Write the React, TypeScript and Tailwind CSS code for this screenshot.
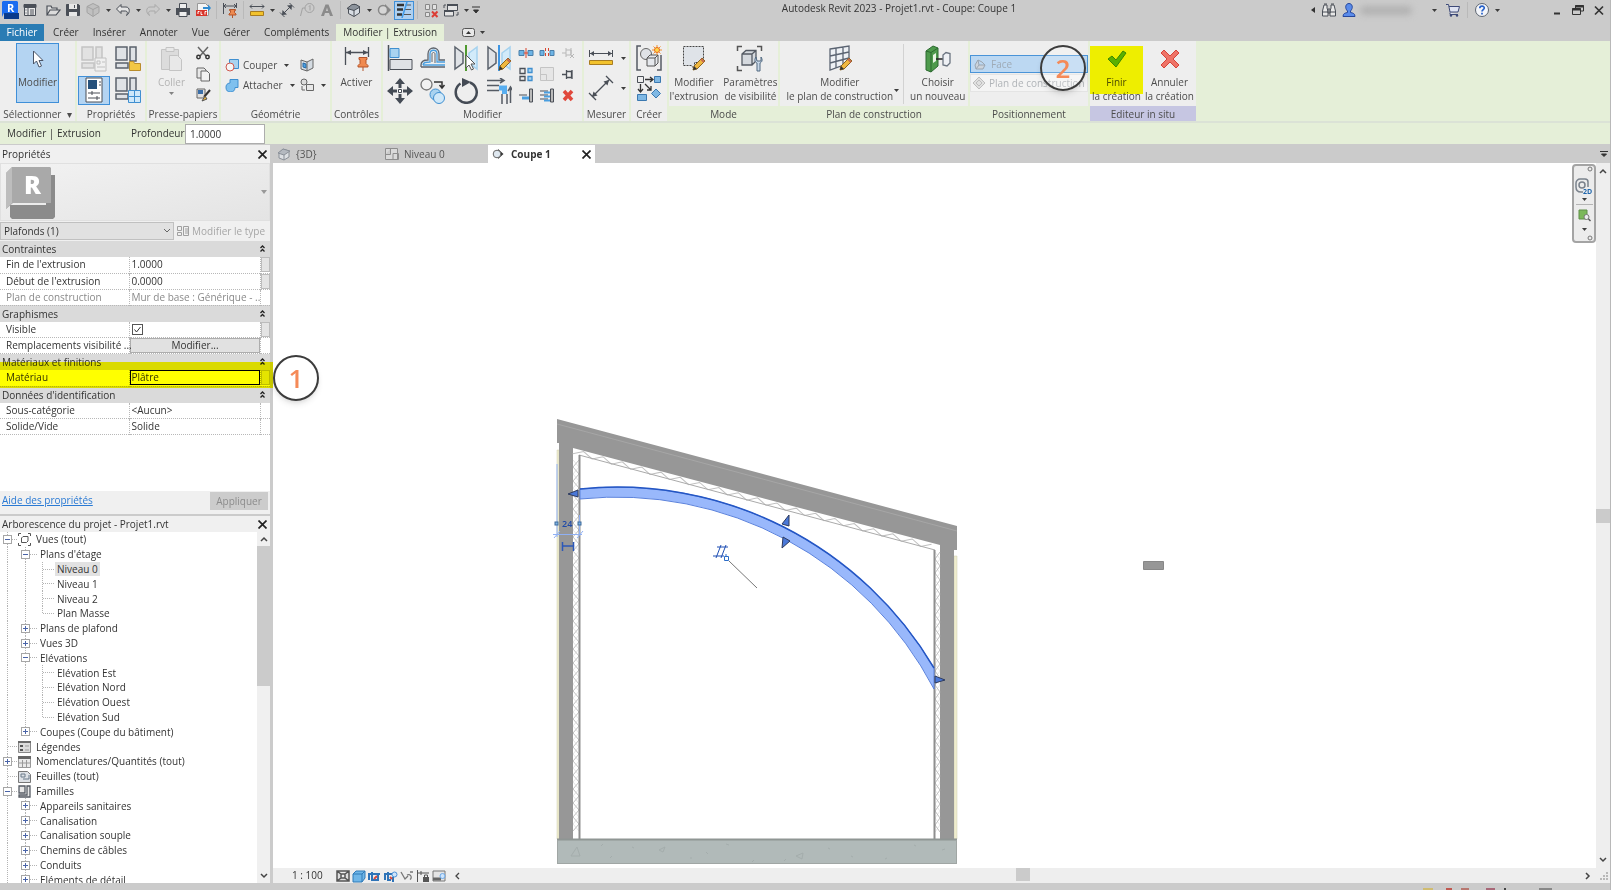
import { ReactNode } from "react";

type IconProps = { w?: number; h?: number; className?: string; children: ReactNode };

const Icon = ({ w = 16, h = 16, className = "", children }: IconProps) => (
  <svg
    width={w}
    height={h}
    viewBox={`0 0 ${w} ${h}`}
    fill="none"
    className={`shrink-0 ${className}`}
    aria-hidden="true"
  >
    {children}
  </svg>
);

const DARK = "#4a4f57";
const BLUE = "#3f8fd0";
const SKY = "#a9d3f0";

const Caret = ({ className = "" }: { className?: string }) => (
  <Icon w={5} h={3} className={className}>
    <path d="M0 0h5L2.500 3z" fill="#3c3c3c" />
  </Icon>
);

const Pencil = ({ x, y }: { x: number; y: number }) => (
  <g transform={`translate(${x} ${y})`}>
    <path d="M0 12l1-4 8-8 3 3-8 8z" fill="#f0b840" stroke="#8a6420" />
    <path d="M8 1l3 3" stroke="#c76a50" strokeWidth="2" />
    <path d="M0 12l1-4 3 3z" fill="#333" />
  </g>
);

const Pin = ({ x, y }: { x: number; y: number }) => (
  <g transform={`translate(${x} ${y})`} stroke="#b4542a" fill="#f08a50">
    <path d="M1 .5h8v2H8v4l2 2v1.500H0V8.500l2-2v-4H1z" />
    <path d="M5 10v4" />
  </g>
);

const RevitLogo = () => (
  <Icon w={18} h={20}>
    <path d="M3 13h15v6H3z" fill="#0b3f94" />
    <path d="M2 1h14l1 1v11H3l-2 4V2z" fill="#1a6cf0" />
    <path d="M16 13h2v6H4l-1-5z" fill="#0a3a8a" />
    <text x="6" y="12" fontSize="11" fontWeight="700" fill="#fff" fontFamily="Open Sans, sans-serif">
      R
    </text>
  </Icon>
);

const quickIcons: Record<string, ReactNode> = {
  home: (
    <>
      <path d="M2.500 3h11v10.500h-11z" fill="#e8e8e8" stroke={DARK} />
      <path d="M2 2.500h12v3H2zM6 6v8" fill={DARK} stroke={DARK} />
      <path d="M8 8h4M8 10h4M8 12h4M3.500 8h1M3.500 11h1" stroke={DARK} />
    </>
  ),
  open: (
    <path d="M2 13V4h4l1 2h5v2M2 13l3-5h10l-4 5z" stroke={DARK} strokeWidth="1.200" fill="#dcdcdc" />
  ),
  save: (
    <>
      <path d="M1.500 2.500h12l1 1v10h-13z" fill={DARK} stroke={DARK} />
      <path d="M4 2h8v5H4zM4 10h8v4H4z" fill="#e8e8e8" />
      <path d="M9 3h1v3H9z" fill={DARK} />
    </>
  ),
  sync: (
    <>
      <path d="M8 1.500l6 3v6l-6 4-6-4v-6z" fill="#c0c0c0" stroke="#a2a2a2" />
      <path d="M2 4.500l6 3 6-3M8 7.500v7" stroke="#a2a2a2" />
    </>
  ),
  undo: (
    <path d="M6 2.500L1.500 7 6 11.500V9h4.500c2 0 2.500 2 1 4.500 4-2.500 3.500-8.500-.5-8.500H6z" fill="#e4e4e4" stroke={DARK} />
  ),
  redo: (
    <path d="M10 2.500L14.500 7 10 11.500V9H5.500c-2 0-2.500 2-1 4.500C.5 11 1 5 5 5h5z" stroke="#a9a9a9" />
  ),
  print: (
    <>
      <path d="M4.500 1.500h7v5h-7z" fill="#eee" stroke={DARK} />
      <path d="M1 6h14v7H1z" fill={DARK} />
      <path d="M4 9.500h8v5H4z" fill="#eee" stroke={DARK} />
    </>
  ),
  pdf: (
    <>
      <path d="M2.500 1.500h8l3 3v9h-11z" fill="#f4f4f4" stroke="#999" />
      <path d="M8 5h5V2.500L16 6l-3 3.500V7H8z" fill="#2f8ad0" />
      <path d="M1 8h11v6H1z" fill="#d8342a" />
      <path d="M3 12v-2.500h1.500M6 9.500v3h1.500M10 12.500v-3h1.500" stroke="#fff" />
    </>
  ),
  dimension: (
    <>
      <path d="M1.500 1v11M14.500 1v5M2 4h12M4 2L2 4l2 2M12 2l2 2-2 2" stroke={DARK} />
      <path d="M7.500 7.500h6v1h-1v2l1.500 1.500v1h-7v-1L8.500 10.500v-2h-1zM10.500 13v3" fill="#ee8a50" stroke="#b4542a" />
    </>
  ),
  measure: (
    <>
      <path d="M1 4.500h14M3 2.500l-2 2 2 2M13 2.500l2 2-2 2" stroke={DARK} />
      <path d="M1.500 9.500h13v4h-13z" fill="#f2c22c" stroke="#a87c20" />
    </>
  ),
  aligned: (
    <>
      <path d="M3 13L13 3M1 10.500L5.500 15M10.500 1L15 5.500" stroke={DARK} />
      <path d="M3 13l.5-5L8 12.500zM13 3L8 3.500 12.500 8z" fill={DARK} />
    </>
  ),
  tag: (
    <>
      <circle cx="10.500" cy="6" r="4.500" stroke="#a2a2a2" />
      <path d="M6 6H3.500L1.500 14M10 4.500l1-1v5" stroke="#a2a2a2" />
    </>
  ),
  letter: <path d="M2 14L6.500 2.500h3L14 14h-3l-1-3H6l-1 3zM7 9h2L8 5.500z" fill="#8b8b8b" fillRule="evenodd" />,
  view3d: (
    <>
      <path d="M2.500 6.500L8 2l5.500 3v6L8 14.500l-5.500-3z" fill="#d8dde3" stroke={DARK} />
      <path d="M1 6.500l5-4h4L14 5 8 8.500z" fill="#8c939c" stroke={DARK} />
      <path d="M8 8.500v6" stroke={DARK} />
    </>
  ),
  section: (
    <>
      <path d="M9 2l6 6-6 6z" fill="#888" />
      <circle cx="7" cy="8" r="4.500" fill="#d6d6d6" stroke="#888" strokeWidth="1.500" />
    </>
  ),
  thin: (
    <>
      <path d="M1 3h7M1 7.500h6M1 12.500h5" stroke="#333" strokeWidth="2.500" />
      <path d="M9.500 3H15M9 7.500h6M8 12.500h7" stroke="#555" />
      <path d="M11 0L6 16" stroke="#3f9be8" strokeWidth="1.500" />
    </>
  ),
  closeViews: (
    <>
      <path d="M2.500 2.500h4v5h-4zM9.500 2.500h4v5h-4zM2.500 10.500h4v4h-4z" fill="#e2e2e2" stroke="#888" />
      <path d="M9 9.500l5.500 5.500M14.500 9.500L9 15" stroke="#dc3c34" strokeWidth="2" />
    </>
  ),
  switchViews: (
    <>
      <path d="M4.500 2.500h10v6h-10zM1.500 8.500h9v5.500h-9z" fill="#e4e4e4" stroke={DARK} />
      <path d="M4 3h11M1 9h10" stroke={DARK} strokeWidth="2" />
      <path d="M1 6V3h2M15 10v3h-2" stroke={DARK} />
    </>
  ),
};

const quickBar = [
  ["open", "Ouvrir"], ["save", "Enregistrer"], ["sync", "Synchroniser"], ["v"], ["undo", "Annuler"], ["v"],
  ["redo", "Rétablir"], ["v"], ["print", "Imprimer"], ["pdf", "Exporter PDF"], ["|"], ["dimension", "Cote"],
  ["|"], ["measure", "Mesurer"], ["v"], ["aligned", "Cote alignée"], ["tag", "Etiquette"], ["letter", "Texte"],
  ["|"], ["view3d", "Vue 3D"], ["v"], ["section", "Coupe"], ["thin", "Lignes fines"], ["|"],
  ["closeViews", "Fermer les vues"], ["switchViews", "Changer de fenêtre"], ["v"],
];

const TitleBar = () => (
  <header className="flex h-[24px] items-start bg-[#cbcbcb]">
    <div className="flex h-[20px] items-center">
      <button type="button" aria-label="Revit" className="flex w-[20px] justify-center">
        <RevitLogo />
      </button>
      <button type="button" aria-label="Accueil" className="mr-[3px] flex w-[20px] justify-center">
        <Icon>{quickIcons.home}</Icon>
      </button>
      {quickBar.map(([name, label], i) => {
        if (name === "|") return <span key={i} className="mx-[3px] h-[18px] w-px bg-[#b9b9b9]" />;
        if (name === "v")
          return (
            <span key={i} className="flex w-[10px] justify-center">
              <Caret />
            </span>
          );
        return (
          <button
            key={i}
            type="button"
            aria-label={label}
            className={`flex h-[19px] w-[20px] items-center justify-center ${
              name === "thin" ? "border border-[#3f8fd8] bg-[#aed0f0]" : ""
            }`}
          >
            <Icon>{quickIcons[name]}</Icon>
          </button>
        );
      })}
      <button type="button" aria-label="Personnaliser" className="flex w-[10px] justify-center">
        <Icon w={8} h={8}>
          <path d="M0 1h8M1.500 4h5L4 7z" stroke="#333" fill="#333" />
        </Icon>
      </button>
    </div>
    <h1 className="flex-1 pl-[6px] text-center leading-[16px]">Autodesk Revit 2023 - Projet1.rvt - Coupe: Coupe 1</h1>
    <div className="flex h-[20px] items-center pr-[5px]">
      <Icon w={4} h={6}>
        <path d="M4 0v6L0 3z" fill="#333" />
      </Icon>
      <button type="button" aria-label="Rechercher" className="ml-[6px]">
        <Icon>
          <path d="M3 3h3v3l1 3v5H1.500V9zM10 3h3l1.500 6v5H9V9l1-3zM7 7h2v4H7z" fill="#e8e8e8" stroke={DARK} />
          <path d="M3 2h3M10 2h3M1.500 10H7M9 10h5.500" stroke={DARK} />
        </Icon>
      </button>
      <button type="button" aria-label="Compte" className="ml-[5px] flex items-center">
        <Icon w={14} h={14}>
          <path d="M1 13.500c0-3 2-3.500 4.500-4V8C2.500 5 3.500.5 7 .5S11.500 5 8.500 8v1.500c2.500.5 4.500 1 4.500 4z" fill="#5a8bea" stroke="#26479c" />
        </Icon>
        <span className="ml-[4px] h-[9px] w-[52px] rounded-full bg-[#b2b2b2] blur-[3px]" />
        <Caret className="ml-[20px]" />
      </button>
      <button type="button" aria-label="Panier" className="ml-[8px]">
        <Icon>
          <path d="M1 2.500h2.500l1.500 7.500h8l1.500-5.500H4M5 10.500v2h8" fill="#dfe3f2" stroke="#3e4a78" />
          <circle cx="6" cy="13.500" r="1.200" fill="#3e4a78" />
          <circle cx="12" cy="13.500" r="1.200" fill="#3e4a78" />
        </Icon>
      </button>
      <span className="mx-[6px] h-[16px] w-px bg-[#b9b9b9]" />
      <button type="button" aria-label="Aide" className="flex items-center">
        <Icon>
          <circle cx="8" cy="8" r="6.500" fill="#f3f5fa" stroke="#5d6570" />
          <path d="M5.800 6.300c0-3 4.500-2.800 4.500-.3 0 1.500-2.300 1.700-2.300 3.500M8 10.800v1.700" stroke="#2660c8" strokeWidth="1.700" />
        </Icon>
        <Caret className="ml-[5px]" />
      </button>
      <button type="button" aria-label="Réduire" className="ml-[53px]">
        <Icon w={8} h={12}>
          <path d="M1 9.500h6" stroke="#333" strokeWidth="2" />
        </Icon>
      </button>
      <button type="button" aria-label="Restaurer" className="ml-[11px]">
        <Icon w={12} h={12}>
          <path d="M3.500 6V1.500h8V7H9M.5 4.500h8v6h-8z" stroke="#333" />
          <path d="M3 2.500h9M0 5.500h9" stroke="#333" strokeWidth="2" />
        </Icon>
      </button>
      <button type="button" aria-label="Fermer" className="ml-[10px]">
        <Icon w={11} h={11}>
          <path d="M1 1.500l8 8M9 1.500l-8 8" stroke="#333" strokeWidth="1.700" />
        </Icon>
      </button>
    </div>
  </header>
);

const menuTabs = ["Créer", "Insérer", "Annoter", "Vue", "Gérer", "Compléments"];

const MenuTabs = () => (
  <nav className="flex h-[17px] items-stretch bg-[#cbcbcb] leading-[17px]">
    <button type="button" className="mr-[2px] w-[44px] bg-[#2a7cb4] text-center text-white">
      Fichier
    </button>
    {menuTabs.map((tab) => (
      <button type="button" key={tab} className="px-[7px]">
        {tab}
      </button>
    ))}
    <button type="button" className="bg-[#e5efd8] px-[7px]">
      Modifier | Extrusion
    </button>
    <button type="button" aria-label="Réduire le ruban" className="ml-[18px] flex items-center gap-[5px]">
      <Icon w={13} h={9}>
        <rect x=".5" y=".5" width="12" height="8" rx="2" fill="#e8e8e8" stroke="#555" />
        <path d="M6.500 3L9 6H4z" fill="#333" />
      </Icon>
      <Caret />
    </button>
  </nav>
);

type PanelProps = { title: string; width: string; foot?: string; children: ReactNode };

const Panel = ({ title, width, foot = "", children }: PanelProps) => (
  <section className={`flex shrink-0 flex-col bg-[#eeeeee] ${width}`}>
    <div className="flex flex-1 justify-center">{children}</div>
    <h2 className={`h-[15px] text-center leading-[16px] whitespace-nowrap ${foot}`}>{title}</h2>
  </section>
);

const BigButton = ({ icon, lines, className = "" }: { icon: ReactNode; lines: string[]; className?: string }) => (
  <button type="button" className={`flex flex-col items-center pt-[4px] ${className}`}>
    <span className="flex h-[28px] items-center">{icon}</span>
    <span className="mt-[2px] leading-[14px] whitespace-nowrap">
      {lines.map((line) => (
        <span key={line} className="block text-center">
          {line}
        </span>
      ))}
    </span>
  </button>
);

const ToolButton = ({ label, className = "", children }: { label: string; className?: string; children: ReactNode }) => (
  <button type="button" aria-label={label} className={`flex items-center justify-center ${className}`}>
    {children}
  </button>
);

const WindowGrid = ({ extra, muted = false }: { extra: ReactNode; muted?: boolean }) => (
  <Icon w={26} h={26}>
    <g stroke={muted ? "#c4c4c4" : "#5b626c"} fill={muted ? "#e2e2e2" : "#dfe2e6"} strokeWidth="1.500">
      <path d="M1 1h11v13H1zM15 1h6v14h-6zM1 17h12v5H1z" />
    </g>
    {extra}
  </Icon>
);

const modifyTools: [string, ReactNode][] = [
  ["Aligner", (
    <>
      <path d="M1.500 0v26" stroke={DARK} strokeWidth="1.500" />
      <path d="M3 3.500h9v9H3z" fill={SKY} stroke={BLUE} />
      <path d="M3 14.500h22v10H3z" fill="#dfe2e6" stroke={DARK} />
    </>
  )],
  ["Décaler", (
    <>
      <path d="M1 22v-2c0-4 3-5 7-5V9c0-8 11-8 11 0v6h6M1 22h24" stroke="#5b626c" strokeWidth="1.300" />
      <path d="M3 20c0-3 3-3 7-3V9c0-5 7-5 7 0v8h8M3 20h22" stroke="#4a9fe0" strokeWidth="1.300" />
      <path d="M12 17V9c0-2 3-2 3 0v9" stroke="#5b626c" />
    </>
  )],
  ["Symétrie - Choisir l'axe", (
    <>
      <path d="M2 2l8 6v10l-8 6z" fill="#dfe2e6" stroke="#5b626c" strokeWidth="1.500" />
      <path d="M24 2l-8 6v10l8 6z" fill="#d2ebfa" stroke="#a5d2ef" strokeWidth="1.500" />
      <path d="M13 0v26" stroke="#4f9a30" strokeWidth="2" />
      <path d="M13 10v13l3-3 2.500 5 2-1-2.500-5h4z" fill="#fff" stroke="#555" />
    </>
  )],
  ["Symétrie - Dessiner l'axe", (
    <>
      <path d="M2 2l8 6v10l-8 6z" fill="#dfe2e6" stroke="#5b626c" strokeWidth="1.500" />
      <path d="M24 2l-8 6v10l8 6z" fill="#d2ebfa" stroke="#a5d2ef" strokeWidth="1.500" />
      <path d="M13 0v26" stroke="#3f96e4" strokeWidth="2" />
      <Pencil x={13} y={13} />
    </>
  )],
  ["Déplacer", (
    <>
      <path d="M13 0l5 6h-3.500v4h-3V6H8zM13 26l5-6h-3.500v-4h-3v4H8zM0 13l6-5v3.500h4v3H6V18zM26 13l-6-5v3.500h-4v3h4V18z" fill="#444b55" />
      <path d="M11.500 11.500h3v3h-3z" fill="#fff" stroke="#444b55" />
    </>
  )],
  ["Copier", (
    <>
      <circle cx="6.500" cy="6.500" r="5.500" fill="#f2f2f2" stroke="#777" strokeWidth="1.300" />
      <path d="M14 4h8v5M19.500 7l2.500 3 2.500-3" stroke="#333" strokeWidth="1.500" />
      <circle cx="15.500" cy="16.500" r="5.500" fill={SKY} stroke={BLUE} />
      <circle cx="19" cy="20" r="5.500" fill="#cfe8f9" stroke={BLUE} />
    </>
  )],
  ["Rotation", (
    <>
      <path d="M17 4.500A10.500 10.500 0 1 1 7.500 5.500" stroke="#444b55" strokeWidth="2.500" />
      <path d="M9 0l9 4-9 5z" fill="#444b55" />
    </>
  )],
  ["Ajuster", (
    <>
      <path d="M1 2.500h17M14 0l4 2.500L14 5M24.500 25V9M22 13l2.500-4 2.500 4M1 7.500h12M1 12.500h12M16 16v10M21 16v10" stroke="#555b64" strokeWidth="1.500" />
      <path d="M13 10h5.500v6" stroke="#58aef0" strokeWidth="5" />
    </>
  )],
];

const smallTools: [string, ReactNode][] = [
  ["Scinder", (
    <>
      <path d="M1 5.500h5v5H1zM10 5.500h5v5h-5z" fill="#6db4e6" stroke="#4a7ea8" />
      <path d="M8 3v10M6 8h4" stroke="#d8452f" />
    </>
  )],
  ["Scinder avec espace", (
    <>
      <path d="M1 5.500h4v5H1zM11 5.500h4v5h-4z" fill="#6db4e6" stroke="#4a7ea8" />
      <path d="M6.500 3v10M9.500 3v10" stroke="#d8452f" strokeDasharray="3 2" />
    </>
  )],
  ["Déverrouiller", <path d="M2 8h4M6 3v9M6 5h5v5H6M11 3v6M10 9l4 4M14 9l-4 4" stroke="#b8b8b8" />],
  ["Réseau", (
    <>
      <path d="M2 2.500h5v5H2zM2 10.500h5v4H2z" fill="#eee" stroke={DARK} strokeWidth="1.300" />
      <path d="M10 2.500h4v4h-4zM10 10.500h4v4h-4z" fill={SKY} stroke={BLUE} strokeWidth="1.300" />
    </>
  )],
  ["Echelle", <path d="M1.500 1.500h13v13h-13zM1.500 8.500h6v6" fill="#e6e6e6" stroke="#c4c4c4" />],
  ["Verrouiller", <path d="M2 8.500h4M6.500 4v9M6.500 5.500h5v6h-5M12 4v9" stroke={DARK} strokeWidth="1.300" />],
  ["Ajuster un élément", (
    <>
      <path d="M1 8h8" stroke={DARK} />
      <path d="M4 11h7" stroke="#4a9fe0" strokeWidth="3" />
      <path d="M11.500 2h3v13h-3z" fill="#bbb" stroke={DARK} />
    </>
  )],
  ["Ajuster plusieurs éléments", (
    <>
      <path d="M1 4h8M1 8h8M1 12h8" stroke={DARK} />
      <path d="M5 5.500h6M5 9.500h6M5 13.500h6" stroke="#4a9fe0" strokeWidth="2" />
      <path d="M11.500 2h3v13h-3z" fill="#bbb" stroke={DARK} />
    </>
  )],
  ["Supprimer", <path d="M4 4l8 9M12 4l-8 9" stroke="#e0483c" strokeWidth="3.500" />],
];

const Ribbon = () => (
  <div className="flex h-[80px] gap-[2px] bg-[#e5efd8] text-[#4c4c4c]">
    <Panel title={"Sélectionner\u00a0\u00a0▾"} width="w-[75px]">
      <button type="button" className="mt-[2px] flex h-[60px] w-[43px] flex-col items-center border border-[#3f8fd8] bg-[#b4d4f2] pt-[6px]">
        <Icon w={12} h={18}>
          <path d="M1.500 1v13l3-3 2.500 6 2.500-1L7 10.500h4z" fill="#fff" stroke="#4a5568" />
        </Icon>
        <span className="mt-[6px] leading-[16px]">Modifier</span>
      </button>
    </Panel>
    <Panel title="Propriétés" width="w-[68px]">
      <div className="grid grid-cols-2 gap-x-[2px] pt-[3px]">
        <ToolButton label="Propriétés du type" className="h-[30px] w-[32px]">
          <WindowGrid muted extra={<path d="M14 12h11v13H14zM16 15h3v3h-3zM21 16h3M16 21h8" fill="#f0f0f0" stroke="#c0c0c0" />} />
        </ToolButton>
        <ToolButton label="Catégorie" className="h-[30px] w-[32px]">
          <WindowGrid extra={<path d="M14.500 24.500v-9h4l1 2h6v7z" fill="#f2c744" stroke="#b98d2c" />} />
        </ToolButton>
        <ToolButton label="Propriétés" className="h-[29px] w-[32px] border border-[#3f8fd8] bg-[#b4d4f2]">
          <Icon w={26} h={26}>
            <path d="M5 1h16v24H5z" fill="#fff" stroke={DARK} />
            <path d="M7 3h9v9H7z" fill="#26517c" />
            <path d="M18 5h2M18 8h2M7 16h12M7 21h12M11 14v4M16 19v4" stroke={DARK} />
          </Icon>
        </ToolButton>
        <ToolButton label="Types de familles" className="h-[29px] w-[32px]">
          <WindowGrid extra={<path d="M13.500 13.500h6v6h-6zM19.500 13.500h6v6h-6zM13.500 19.500h6v6h-6zM19.500 19.500h6v6h-6z" fill="#cfe8fa" stroke={BLUE} />} />
        </ToolButton>
      </div>
    </Panel>
    <Panel title="Presse-papiers" width="w-[72px]">
      <div className="flex gap-[10px] pl-[3px]">
        <button type="button" disabled className="flex flex-col items-center pt-[4px] text-[#b4b4b4]">
          <Icon w={24} h={28}>
            <path d="M2.500 4.500h17v20h-17z" fill="#dcdcdc" stroke="#c4c4c4" />
            <path d="M7 2.500h8v4H7zM10.500 10.500h8l4 4v11h-12z" fill="#e8e8e8" stroke="#c4c4c4" />
          </Icon>
          <span className="mt-[2px] leading-[14px]">Coller</span>
          <Caret className="mt-[3px] opacity-60" />
        </button>
        <div className="flex flex-col gap-[5px] pt-[4px]">
          <ToolButton label="Couper dans le presse-papiers">
            <Icon>
              <path d="M3 2l8 9M13 2l-8 9" stroke="#666" strokeWidth="1.500" />
              <circle cx="3.500" cy="12" r="1.700" stroke="#333" strokeWidth="1.500" />
              <circle cx="12.500" cy="12" r="1.700" stroke="#333" strokeWidth="1.500" />
            </Icon>
          </ToolButton>
          <ToolButton label="Copier dans le presse-papiers">
            <Icon>
              <path d="M2 2h7l2 2v8H2z" fill="#e8e8e8" stroke="#666" />
              <path d="M6 5h6l2.500 2.500V15H6z" fill="#f2f2f2" stroke="#666" />
            </Icon>
          </ToolButton>
          <ToolButton label="Appliquer les propriétés du type">
            <Icon>
              <path d="M2 2h8v9H2z" fill="#e0e0e0" stroke="#666" />
              <path d="M3 3h5v4H3z" fill="#3a6ea8" />
              <path d="M15 3l-6 7" stroke="#333" strokeWidth="2" />
              <path d="M10 9l-3 5 5-2z" fill="#e4b040" stroke="#555" />
            </Icon>
          </ToolButton>
        </div>
      </div>
    </Panel>
    <Panel title="Géométrie" width="w-[109px]">
      <div className="flex w-full flex-col px-[4px] pt-[14px] leading-[20px]">
        <div className="flex items-center">
          <button type="button" className="flex items-center gap-[4px]">
            <Icon w={14} h={14}>
              <path d="M4.500 1.500h9v9h-9z" fill={SKY} stroke={BLUE} />
              <circle cx="5" cy="9" r="4" fill="#f6f6f6" stroke="#d05a50" />
            </Icon>
            Couper
          </button>
          <Caret className="mr-auto ml-[7px]" />
          <ToolButton label="Face" className="mr-[12px]">
            <Icon w={14} h={14}>
              <path d="M1 2l6 2 6-3v9l-6 3-6-2z" fill="#d4dbe2" stroke="#666" />
              <path d="M3 5l3 1v4L3 9z" fill="#4a9fe0" stroke="#2a6ca8" />
              <path d="M7 4v9" stroke="#666" />
            </Icon>
          </ToolButton>
        </div>
        <div className="flex items-center">
          <button type="button" className="flex items-center gap-[4px]">
            <Icon w={14} h={14}>
              <path d="M5 1.500h8v8h-3A4.500 4.500 0 1 1 5 5z" fill="#7fc0ee" stroke={BLUE} />
            </Icon>
            Attacher
          </button>
          <Caret className="mr-auto ml-[7px]" />
          <ToolButton label="Fractionner">
            <Icon w={14} h={14}>
              <circle cx="4" cy="4" r="3" fill="#ddd" stroke="#666" />
              <path d="M6.500 6.500h7v6h-7zM2 8v4h3" stroke="#666" fill="#e8e8e8" />
            </Icon>
          </ToolButton>
          <Caret className="ml-[7px]" />
        </div>
      </div>
    </Panel>
    <Panel title="Contrôles" width="w-[49px]">
      <BigButton
        lines={["Activer"]}
        icon={
          <Icon w={26} h={26}>
            <path d="M1.500 1v18M24.500 1v10M2 6.500h22" stroke={DARK} strokeWidth="1.300" />
            <path d="M2 6.500L7 4v5zM24 6.500L19 4v5z" fill={DARK} />
            <Pin x={14} y={11} />
          </Icon>
        }
      />
    </Panel>
    <Panel title="Modifier" width="w-[199px]">
      <div className="grid grid-cols-4 gap-x-[7px] gap-y-[4px] pt-[4px]">
        {modifyTools.map(([label, icon]) => (
          <ToolButton key={label} label={label} className="h-[26px] w-[26px]">
            <Icon w={26} h={26}>
              {icon}
            </Icon>
          </ToolButton>
        ))}
      </div>
      <div className="mr-[3px] ml-[6px] grid grid-cols-3 content-start gap-x-[5px] gap-y-[5px] pt-[4px]">
        {smallTools.map(([label, icon]) => (
          <ToolButton key={label} label={label} className="h-[16px] w-[16px]">
            <Icon>{icon}</Icon>
          </ToolButton>
        ))}
      </div>
    </Panel>
    <Panel title="Mesurer" width="w-[45px]">
      <div className="flex flex-col gap-[4px] pt-[4px]">
        <ToolButton label="Mesurer entre deux références" className="h-[26px] gap-[7px]">
          <Icon w={26} h={26}>
            <path d="M1.500 5v7M24.500 5v7M2 8.500h22" stroke={DARK} />
            <path d="M2 8.500L6 6v5zM24 8.500L20 6v5z" fill={DARK} />
            <path d="M1.500 15.500h23v4h-23z" fill="#f2c22c" stroke="#a87c20" />
          </Icon>
          <Caret />
        </ToolButton>
        <ToolButton label="Cote alignée" className="h-[26px] gap-[7px]">
          <Icon w={26} h={26}>
            <path d="M4 22L21 5M1 18l7 7M18 1l7 7" stroke={DARK} strokeWidth="1.300" />
            <path d="M4 22l1.500-5.500L9.500 20.500zM21 5l-5.500 1.500 4 4z" fill={DARK} />
          </Icon>
          <Caret />
        </ToolButton>
      </div>
    </Panel>
    <Panel title="Créer" width="w-[36px]">
      <div className="flex flex-col gap-[4px] pt-[4px]">
        <ToolButton label="Créer un groupe">
          <Icon w={26} h={26}>
            <path d="M5 1H1v24h4M21 25h4V10" stroke="#555b64" strokeWidth="1.500" />
            <circle cx="10" cy="9" r="5.500" fill="#dfe2e6" stroke="#666" />
            <path d="M11 13l3-3h8v8l-3 3h-8z" fill="#e6e9ed" stroke="#555" />
            <path d="M11 13h8v8M19 13l3-3" stroke="#555" />
            <path d="M21 0v10M16 5h10M17.500 1.500l7 7M24.500 1.500l-7 7" stroke="#f09030" />
            <circle cx="21" cy="5" r="2.500" fill="#ffd84a" stroke="#e86a20" />
          </Icon>
        </ToolButton>
        <ToolButton label="Créer un assemblage">
          <Icon w={26} h={26}>
            <path d="M1.500 1.500h6v6h-6z" fill="#eee" stroke={DARK} />
            <path d="M18.500 1.500h6v6h-6zM1.500 19.500h9v6h-9zM20 14l4.500 4.500L20 23l-4.500-4.500z" fill="#7fb8e4" stroke="#3a78b0" />
            <path d="M9 4.500h8M14 2l3 2.500L14 7M4.500 9v8M2 14l2.500 3L7 14M9 9l6 6M15 11v4h-4" stroke="#333" strokeWidth="1.300" />
          </Icon>
        </ToolButton>
      </div>
    </Panel>
    <Panel title="Mode" width="w-[109px]" foot="bg-[#e5efd8]">
      <div className="flex gap-[5px]">
        <BigButton
          lines={["Modifier", "l'extrusion"]}
          icon={
            <Icon w={26} h={28}>
              <path d="M2.500 1.500h20v16h-9v7l-3-4h-8z" fill="#dfe3e8" stroke="#444" strokeDasharray="2 1" />
              <Pencil x={12} y={13} />
            </Icon>
          }
        />
        <BigButton
          lines={["Paramètres", "de visibilité"]}
          icon={
            <Icon w={28} h={28}>
              <path d="M6 1.500H1.500V6M21 1.500h4.500V6M6 25.500H1.500V21" stroke="#555" strokeWidth="1.500" />
              <path d="M6 9l4-3.500h10V16l-4 4H6zM6 9h10v11M16 9l4-3.500" fill="#d5d9de" stroke="#555b64" strokeWidth="1.300" />
              <path d="M20 12c-2 3-1 5 1 6v8h3v-8c2-1 3-3 1-6v4h-4z" fill="#c8d8e8" stroke="#506880" />
            </Icon>
          }
        />
      </div>
    </Panel>
    <Panel title="Plan de construction" width="w-[188px]" foot="bg-[#e5efd8]">
      <div className="flex pl-[4px]">
        <BigButton
          lines={["Modifier", "le plan de construction"]}
          icon={
            <Icon w={26} h={28}>
              <path d="M3 4l19-3v17l-19 7zM3 11l19-4M3 18l19-5M9 3v20M16 2v18" fill="#eef1f5" stroke="#5b6472" strokeWidth="1.300" />
              <Pencil x={13} y={13} />
            </Icon>
          }
        />
        <Caret className="mt-[48px] mr-[4px] ml-px" />
        <span className="mt-[3px] mr-[6px] h-[60px] w-px bg-[#d2d2d2]" />
        <BigButton
          lines={["Choisir", "un nouveau"]}
          icon={
            <Icon w={28} h={28}>
              <path d="M2 6l7-5 5 2v18l-7 6-5-2z" fill="#4e9a4c" stroke="#2c6a30" />
              <path d="M2 6l5 1.500V27M7 7.500L14 3" stroke="#2c6a30" />
              <path d="M9 10l3-2v8l-3 2z" fill="#e8f4e4" />
              <path d="M12 14h7" stroke="#222" strokeWidth="1.500" />
              <path d="M19 10l3-2.500 4 1V18l-3 3-4-1z" fill="#eef0f4" stroke="#6b7480" strokeWidth="1.300" />
            </Icon>
          }
        />
      </div>
    </Panel>
    <Panel title="Positionnement" width="w-[118px]" foot="bg-[#e5efd8]">
      <div className="relative flex w-full flex-col gap-px pt-[14px] text-[#b0b4b8]">
        <button type="button" disabled className="flex h-[18px] items-center gap-[5px] border border-[#4a94d8] bg-[#bcd8f2] pl-[3px] text-[#9fabb6]">
          <Icon w={12} h={12}>
            <path d="M1 7l3-5 4 2 3 3-2 4H2zM4 2l1 5 6 0M5 7l-3 4" fill="#ccd4dc" stroke="#9aa6b2" />
          </Icon>
          Face
        </button>
        <button type="button" disabled className="flex h-[18px] items-center gap-[4px] border border-[#e4e4e4] bg-[#f4f4f4] pl-[2px] whitespace-nowrap">
          <Icon w={12} h={12}>
            <path d="M6 0l6 6-6 6-6-6zM6 3l3 3-3 3-3-3z" fill="#e0e0e0" stroke="#bdbdbd" />
          </Icon>
          Plan de construction
        </button>
        <div className="absolute top-[4px] right-[2px] flex h-[46px] w-[46px] items-center justify-center rounded-full border-2 border-[#3c3c3c] bg-white/20 text-[26px] font-semibold text-[#f58a58] shadow-md">
          2
        </div>
      </div>
    </Panel>
    <Panel title="Editeur in situ" width="w-[106px]" foot="bg-[#c6c6e2]">
      <div className="relative flex">
        <BigButton
          className="w-[53px]"
          lines={["Finir", "la création"]}
          icon={
            <Icon w={20} h={20}>
              <path d="M1 10l4-3 4 4 7-9 3 2-10 14z" fill="#5ab038" stroke="#3a8820" />
            </Icon>
          }
        />
        <BigButton
          className="w-[53px]"
          lines={["Annuler", "la création"]}
          icon={
            <Icon w={20} h={20}>
              <path d="M4 1l6 6 6-6 3 3-6 6 6 6-3 3-6-6-6 6-3-3 6-6-6-6z" fill="#ee7468" stroke="#d84438" />
            </Icon>
          }
        />
        <div className="pointer-events-none absolute top-[5px] left-0 h-[48px] w-[53px] bg-[#ffff00] mix-blend-multiply" />
      </div>
    </Panel>
  </div>
);

const OptionsBar = () => (
  <div className="flex h-[23px] items-center border-t-2 border-[#dbe2d6] bg-[#e5efd8] pl-[7px]">
    <span className="w-[124px]">Modifier | Extrusion</span>
    <label htmlFor="depth" className="w-[54px]">
      Profondeur
    </label>
    <input
      id="depth"
      defaultValue="1.0000"
      className="h-[20px] w-[80px] border border-[#adadad] bg-white px-[4px]"
    />
  </div>
);

const CloseX = ({ label }: { label: string }) => (
  <button type="button" aria-label={label}>
    <Icon w={9} h={9}>
      <path d="M.5 .5l8 8M8.500 .5l-8 8" stroke="#222" strokeWidth="1.700" />
    </Icon>
  </button>
);

type Prop = { name: string; value?: string; kind?: string; more?: boolean };

const groups: { title: string; rows: Prop[] }[] = [
  {
    title: "Contraintes",
    rows: [
      { name: "Fin de l'extrusion", value: "1.0000", more: true },
      { name: "Début de l'extrusion", value: "0.0000", more: true },
      { name: "Plan de construction", value: "Mur de base : Générique - ...", kind: "readonly" },
    ],
  },
  {
    title: "Graphismes",
    rows: [
      { name: "Visible", kind: "check", more: true },
      { name: "Remplacements visibilité ...", value: "Modifier...", kind: "button" },
    ],
  },
  {
    title: "Matériaux et finitions",
    rows: [{ name: "Matériau", value: "Plâtre", kind: "active", more: true }],
  },
  {
    title: "Données d'identification",
    rows: [
      { name: "Sous-catégorie", value: "<Aucun>" },
      { name: "Solide/Vide", value: "Solide" },
    ],
  },
];

const PropValue = ({ row, id }: { row: Prop; id: string }) => {
  if (row.kind === "check")
    return (
      <span className="relative ml-[2px] block h-[11px] w-[11px]">
        <input id={id} type="checkbox" defaultChecked className="block h-[11px] w-[11px] appearance-none border border-[#555] bg-white" />
        <Icon w={11} h={11} className="pointer-events-none absolute top-0 left-0">
          <path d="M2.500 5.500l2 2.500 4-5" stroke="#333" />
        </Icon>
      </span>
    );
  if (row.kind === "button")
    return (
      <button id={id} type="button" className="block h-[15px] w-full border border-[#adadad] bg-[#e1e1e1] text-center leading-[13px]">
        {row.value}
      </button>
    );
  return (
    <input
      id={id}
      defaultValue={row.value}
      readOnly={row.kind === "readonly"}
      className={`block h-[15px] w-full bg-transparent ${
        row.kind === "active" ? "border border-black" : "pl-[1px]"
      }`}
    />
  );
};

const PropertiesPanel = () => (
  <section className="flex h-[369px] flex-col bg-[#f0f0f0]">
    <div className="flex h-[18px] items-center justify-between pr-[3px] pl-[2px]">
      <h2>Propriétés</h2>
      <CloseX label="Fermer les propriétés" />
    </div>
    <div className="flex h-[58px] items-center justify-between border border-[#e0e0e0] bg-linear-to-br from-[#f2f2f2] to-[#e4e4e4] pr-[2px] pl-[3px]">
      <Icon w={53} h={55}>
        <path d="M6 40h36V10h9v42l-2 2H8l-2-2z" fill="#8b8b8b" />
        <path d="M8 2h38l1 1v35H9L2 44V8z" fill="#a9a9a9" />
        <path d="M2 44V8l6-6v36z" fill="#bdbdbd" />
        <text x="20" y="29" fontSize="25" fontWeight="800" fill="#fff" fontFamily="Open Sans, sans-serif">
          R
        </text>
      </Icon>
      <Icon w={6} h={4}>
        <path d="M0 0h6L3 4z" fill="#999" />
      </Icon>
    </div>
    <div className="flex h-[20px] items-center justify-between">
      <div className="relative">
        <select aria-label="Filtre" className="h-[18px] w-[174px] appearance-none border border-[#c0c0c0] bg-[#e1e1e1] pl-[3px]">
          <option>Plafonds (1)</option>
        </select>
        <Icon w={8} h={6} className="pointer-events-none absolute top-[6px] right-[3px]">
          <path d="M1 1l3 3 3-3" stroke="#666" />
        </Icon>
      </div>
      <button type="button" disabled className="flex items-center gap-[3px] pr-[5px] whitespace-nowrap text-[#a6a6a6]">
        <Icon w={12} h={12}>
          <path d="M.5 1.500h4v4h-4zM.5 7.500h4v3h-4zM6.500 1.500h5v9h-5zM8 4h3M8 6h3M8 8h3" stroke="#a0a0a0" />
        </Icon>
        Modifier le type
      </button>
    </div>
    <div className="relative flex-1 bg-white">
      <table className="w-full table-fixed border-collapse">
        <colgroup>
          <col />
          <col className="w-[130px]" />
          <col className="w-[10px]" />
        </colgroup>
        {groups.map((group) => (
          <tbody key={group.title}>
            <tr className="h-[16px] bg-[#dadada]">
              <th colSpan={2} className="p-0 pl-[2px] text-left leading-[16px] font-normal">
                {group.title}
              </th>
              <td className="p-0">
                <Icon w={5} h={8}>
                  <path d="M.5 3l2-2 2 2M.5 6.500l2-2 2 2" stroke="#222" strokeWidth="1.300" />
                </Icon>
              </td>
            </tr>
            {group.rows.map((row) => (
              <tr
                key={row.name}
                className={`h-[16px] border-b border-dotted border-[#b8b8b8] ${
                  row.kind === "readonly" ? "text-[#8a8a8a]" : ""
                }`}
              >
                <td className="p-0 pl-[6px] leading-[15px] whitespace-nowrap">
                  <label htmlFor={row.name}>{row.name}</label>
                </td>
                <td className="border-x border-dotted border-[#b8b8b8] p-0">
                  <PropValue row={row} id={row.name} />
                </td>
                <td className="p-0">
                  {row.more && (
                    <button
                      type="button"
                      aria-label={`Associer ${row.name}`}
                      className="block h-[15px] w-[9px] border border-[#bcbcbc] bg-[#e4e4e4]"
                    />
                  )}
                </td>
              </tr>
            ))}
          </tbody>
        ))}
      </table>
      {/* step 1 : material row */}
      <div className="pointer-events-none absolute top-[121px] -right-[3px] left-0 h-[26px] bg-[#ffff00] mix-blend-multiply" />
      <div className="absolute top-[114px] -right-[49px] z-10 flex h-[46px] w-[46px] items-center justify-center rounded-full border-2 border-[#3c3c3c] bg-white text-[26px] font-semibold text-[#f58a58] shadow-md">
        1
      </div>
    </div>
    <div className="flex h-[23px] items-start justify-between px-[2px] pt-[1px] leading-[16px]">
      <a href="#aide" className="text-[#2a7ad4] underline">
        Aide des propriétés
      </a>
      <button type="button" disabled className="h-[18px] w-[58px] bg-[#cccccc] text-[#8c8c8c]">
        Appliquer
      </button>
    </div>
  </section>
);

type Node = { label: string; level: number; state?: "+" | "-"; icon?: string; last?: boolean; selected?: boolean; open?: boolean };

// `open` keeps the level 1 guide running through the row
const nodes: Node[] = [
  { label: "Vues (tout)", level: 0, state: "-", icon: "views" },
  { label: "Plans d'étage", level: 1, state: "-", open: true },
  { label: "Niveau 0", level: 2, selected: true, open: true },
  { label: "Niveau 1", level: 2, open: true },
  { label: "Niveau 2", level: 2, open: true },
  { label: "Plan Masse", level: 2, last: true, open: true },
  { label: "Plans de plafond", level: 1, state: "+", open: true },
  { label: "Vues 3D", level: 1, state: "+", open: true },
  { label: "Elévations", level: 1, state: "-", open: true },
  { label: "Elévation Est", level: 2, open: true },
  { label: "Elévation Nord", level: 2, open: true },
  { label: "Elévation Ouest", level: 2, open: true },
  { label: "Elévation Sud", level: 2, last: true, open: true },
  { label: "Coupes (Coupe du bâtiment)", level: 1, state: "+" },
  { label: "Légendes", level: 0, icon: "legend" },
  { label: "Nomenclatures/Quantités (tout)", level: 0, state: "+", icon: "schedule" },
  { label: "Feuilles (tout)", level: 0, icon: "sheet" },
  { label: "Familles", level: 0, state: "-", icon: "family" },
  { label: "Appareils sanitaires", level: 1, state: "+", open: true },
  { label: "Canalisation", level: 1, state: "+", open: true },
  { label: "Canalisation souple", level: 1, state: "+", open: true },
  { label: "Chemins de câbles", level: 1, state: "+", open: true },
  { label: "Conduits", level: 1, state: "+", open: true },
  { label: "Eléments de détail", level: 1, state: "+", open: true },
];

const nodeIcons: Record<string, ReactNode> = {
  views: <path d="M3 .5H.5V3M10 .5h2.500V3M3 12.500H.5V10M10 12.500h2.500V10M3.500 5L5 3.500h5V8L8.500 9.500h-5z" stroke="#555" />,
  legend: (
    <>
      <path d="M.5 1.500h12v11H.5z" fill="#dcdcdc" stroke="#888" />
      <path d="M0 2h13" stroke="#6a6a6a" strokeWidth="2" />
      <path d="M2 6h3M2 10h3" stroke="#555" strokeWidth="2" />
      <path d="M7 6h4M7 10h4" stroke="#999" />
    </>
  ),
  schedule: (
    <>
      <path d="M.5 1.500h12v11H.5zM4.500 5v7M8.500 5v7M0 8h13" fill="#e9e9e9" stroke="#999" />
      <path d="M0 2.500h13" stroke="#666" strokeWidth="3" />
    </>
  ),
  sheet: (
    <>
      <path d="M.5 1.500h9l3 3v8H.5z" fill="#dde1e6" stroke="#777" />
      <path d="M3 4h4v3H3zM5 9h6V5" stroke="#6a7a8a" />
    </>
  ),
  family: <path d="M1 1h6v7H1zM9 1h3v11H1v-2h8z" fill="#e6e6e6" stroke="#555b64" strokeWidth="1.300" />,
};

const TreeGuides = ({ node }: { node: Node }) => (
  <svg className="absolute inset-0 h-full w-[57px]" fill="none" aria-hidden="true">
    <g stroke="#b4b4b4" strokeDasharray="1 1">
      <path d="M7.500 0v16" />
      {node.open && <path d="M25.500 0v16" />}
      {node.level === 1 && !node.open && <path d="M25.500 0v8" />}
      {node.level === 2 && <path d={node.last ? "M42.500 0v8" : "M42.500 0v16"} />}
      {node.level === 0 && <path d="M8 7.500h9" />}
      {node.level === 1 && <path d="M26 7.500h12" />}
      {node.level === 2 && <path d="M43 7.500h12" />}
    </g>
    {node.state && (
      <g transform={node.level === 0 ? "translate(3 3)" : "translate(21 3)"}>
        <rect x=".5" y=".5" width="8" height="8" fill="#fff" stroke="#a6a6a6" />
        <path d={node.state === "+" ? "M2 4.500h5M4.500 2v5" : "M2 4.500h5"} stroke="#4a64a8" />
      </g>
    )}
    {node.icon && <g transform="translate(18 1)">{nodeIcons[node.icon]}</g>}
  </svg>
);

const indents = ["pl-[34px]", "pl-[38px]", "pl-[55px]"];

const ProjectBrowser = () => (
  <section className="flex min-h-0 flex-1 flex-col border-t-2 border-[#cbcbcb] bg-[#f0f0f0]">
    <div className="flex h-[16px] items-center justify-between pr-[3px] pl-[2px]">
      <h2>Arborescence du projet - Projet1.rvt</h2>
      <CloseX label="Fermer l'arborescence" />
    </div>
    <div className="flex min-h-0 flex-1">
      <div className="min-w-0 flex-1 overflow-hidden bg-white">
        <ul className="flex h-[calc(100%+4px)] flex-col">
          {nodes.map((node) => (
            <li key={node.label} className={`relative flex min-h-0 flex-1 items-center ${indents[node.level]}`}>
              <TreeGuides node={node} />
              <button
                type="button"
                className={`px-[2px] leading-[14px] whitespace-nowrap ${node.selected ? "bg-[#e2e2e2]" : ""}`}
              >
                {node.label}
              </button>
            </li>
          ))}
        </ul>
      </div>
      <div className="flex w-[13px] flex-col items-center bg-[#f0f0f0] py-[4px]">
        <Icon w={8} h={6}>
          <path d="M1 5l3-3 3 3" stroke="#444" strokeWidth="1.500" />
        </Icon>
        <div className="mt-[4px] h-[140px] w-full bg-[#cbcbcb]" />
        <Icon w={8} h={6} className="mt-auto">
          <path d="M1 1l3 3 3-3" stroke="#444" strokeWidth="1.500" />
        </Icon>
      </div>
    </div>
  </section>
);

const DocTabs = () => (
  <div className="flex h-[18px] items-stretch bg-[#cbcbcb]">
    <button type="button" className="flex w-[107px] items-center gap-[5px] pl-[4px] text-[#555]">
      <Icon w={14} h={14}>
        <path d="M2 6l4-4 6 2v6l-5 3-5-2z" fill="#dcdfe3" stroke="#8a9098" />
        <path d="M1 6l5-4 7 2-6 4zM7 8v5" fill="#b4b9c0" stroke="#8a9098" />
      </Icon>
      {"{3D}"}
    </button>
    <button type="button" className="flex w-[108px] items-center gap-[5px] pl-[5px] text-[#555]">
      <Icon w={14} h={14}>
        <path d="M.5 1.500h12v11H.5zM.5 7.500h5v-6M8 6.500h5.500v6H8z" fill="#dadada" stroke="#8e8e8e" />
      </Icon>
      Niveau 0
    </button>
    <div className="flex w-[107px] items-center justify-between bg-white pr-[4px] pl-[4px]">
      <button type="button" className="flex items-center gap-[7px] font-bold">
        <Icon w={12} h={12}>
          <path d="M6 1l5.500 5L6 11z" fill="#333" />
          <circle cx="5" cy="6" r="3.800" fill="#dfe8f0" stroke="#666" />
        </Icon>
        Coupe 1
      </button>
      <CloseX label="Fermer Coupe 1" />
    </div>
    <button type="button" aria-label="Liste des vues" className="mr-[2px] ml-auto">
      <Icon w={8} h={8}>
        <path d="M0 1.500h8M1.500 4h5L4 6.500z" stroke="#333" fill="#333" />
      </Icon>
    </button>
  </div>
);

const zigzag = (count: number, step: number, at: number, depth: number) =>
  Array.from({ length: count }, (_, i) => `${i ? "L" : "M"}${i % 2 ? at : at + depth} ${i * step}`).join("");

const SectionDrawing = () => (
  <svg className="absolute inset-0 h-full w-full" fill="none" role="img" aria-label="Coupe 1">
    <g transform="translate(-273 -163)">
      <path d="M557 450h2v389h-2zM954 556h3v283h-3z" fill="#efedcf" stroke="#cfcfae" strokeWidth=".5" />
      <path d="M557 419l400 107v24h-3v289h-14V545L573 448v391h-14V443h-2z" fill="#979797" />
      <path d="M557 424l400 107" stroke="#a6a6a6" />
      <g stroke="#c0c0c0">
        <path d={zigzag(54, 7, 573, 6)} transform="translate(0 460)" />
        <path d={zigzag(54, 7, 579, -6)} transform="translate(0 460)" opacity=".4" />
        <path d={zigzag(41, 7, 935, 5)} transform="translate(0 552)" />
        <path d={zigzag(41, 7, 940, -5)} transform="translate(0 552)" opacity=".4" />
        <path
          d={Array.from({ length: 38 }, (_, i) => `${i ? "L" : "M"}${i * 10} ${i % 2 ? 0 : 5}`).join("")}
          transform="translate(574 449) rotate(14.900)"
        />
        <path d="M579 455l356 95" stroke="#aaa" />
      </g>
      <path d="M579.500 455v384M934.500 550v289" stroke="#8f8f8f" strokeWidth="2" />
      <path d="M557 839h400v25H557z" fill="#b1bab9" />
      <path d="M557 839.500h400" stroke="#8f9694" strokeWidth="2" />
      <path d="M557 863.500h400M557.500 840v24M956.500 840v24" stroke="#a0a6a4" />
      <path
        d="M571 856l6-9 3 9zM659 850l6-3-2 5zM796 856l7-3-1 6zM610 858l2-2M632 847l2 1M690 858h2M726 844l3 1M752 862l2-2M784 861l2-2M828 848l2 1M851 856l2 1M885 859l2-1M914 845l2 1M942 850l3-1M601 846l2-2M706 852l2 2"
        stroke="#a4adac"
      />

      <path d="M580 489A368 368 0 0 1 934 668V689A358 358 0 0 0 580 499z" fill="#99b8fb" stroke="#5b82dc" />
      <path d="M580 489A368 368 0 0 1 934 668" stroke="#2456c4" strokeWidth="1.500" />
      <g fill="#4a78d8" stroke="#2e3a5c">
        <path d="M568 494l10-4v7zM945 680l-10-4v7zM782 524l7-9v11zM782 548l1-11 7 4z" />
      </g>

      <path d="M557 464v73M579.500 515v20M553 534.500h29M554 538l6-7M577 538l6-7" stroke="#8fb0f4" />
      <rect x="555" y="522" width="3" height="3" fill="#7fb4e4" stroke="#3c6a9c" />
      <rect x="578" y="522" width="3" height="3" fill="#7fb4e4" stroke="#3c6a9c" />
      <text x="562" y="527" fontSize="9" fontWeight="600" fill="#1f4aa8" fontFamily="Open Sans, sans-serif">
        24
      </text>
      <path d="M562.500 542v9M573.500 542v9M563 546h10" stroke="#2c58b8" strokeWidth="1.500" />

      <path d="M717 547h11M713 556h11M721 545l-5 13M726 545l-5 13" stroke="#1f4fb4" />
      <path d="M724.500 556.500h4v4h-4zM726 554v2" stroke="#2a6cc8" />
      <path d="M729 561l28 27" stroke="#777" />
      <path d="M1143.500 561.500h20v8h-20z" fill="#979797" stroke="#888" />
    </g>
  </svg>
);

const NavigationBar = () => (
  <div className="absolute top-[1px] right-0 flex h-[79px] w-[24px] flex-col items-center rounded-[4px] border-2 border-[#a4a4a4] bg-[#ececec]">
    <Icon w={6} h={6} className="mr-px self-end">
      <circle cx="3" cy="3" r="2" stroke="#777" />
    </Icon>
    <button type="button" aria-label="Roue de navigation 2D" className="mt-[6px] flex flex-col items-center gap-[3px]">
      <Icon w={18} h={17}>
        <path d="M13 9V4c0-2-1-3-3-3H5C3 1 1 3 1 5v4c0 3 2 5 5 5h2" stroke="#7a828c" strokeWidth="1.500" />
        <circle cx="7" cy="7" r="3" stroke="#7a828c" strokeWidth="1.500" />
        <text x="8" y="16" fontSize="7" fontWeight="700" fill="#1f66ac" fontFamily="Open Sans, sans-serif">
          2D
        </text>
      </Icon>
      <Caret />
    </button>
    <span className="my-[3px] h-px w-[17px] bg-[#b4b4b4]" />
    <button type="button" aria-label="Zoom" className="flex flex-col items-center gap-[6px]">
      <Icon w={13} h={14}>
        <path d="M1 2h8v9H1z" fill="#7cb85a" stroke="#5f8f48" />
        <circle cx="8.500" cy="9" r="2.500" fill="#eee" stroke="#777" />
        <path d="M10.500 11l2 2" stroke="#555" strokeWidth="1.500" />
      </Icon>
      <Caret />
    </button>
    <Icon w={6} h={6} className="mt-auto mr-px self-end">
      <circle cx="3" cy="3" r="2" stroke="#777" />
    </Icon>
  </div>
);

const viewTools: [string, ReactNode][] = [
  ["Niveau de détail", <path d="M1 2h12v10H1zM1 2l4 3h4l4-3M1 12l4-3h4l4 3M5 5v4h4V5z" fill="#ddd" stroke="#555" strokeWidth="1.500" />],
  ["Style visuel", (
    <>
      <path d="M1 5l3-3h9v7l-3 4H1z" fill="#6fb6e8" stroke="#2f7ab8" />
      <path d="M1 5h9v8M10 5l3-3" stroke="#2f7ab8" />
    </>
  )],
  ["Cadrer la vue", (
    <>
      <path d="M1 11V5h11M4 3v8h6M10 4v8" stroke="#2f74b8" strokeWidth="2" />
      <path d="M6 10l3-3" stroke="#d8483c" strokeWidth="2" />
    </>
  )],
  ["Afficher la zone cadrée", (
    <>
      <path d="M1 11V5h7M4 3v8h3M9 8v5" stroke="#2f74b8" strokeWidth="2" />
      <circle cx="10.500" cy="5.500" r="2.500" fill="#cfe4fa" stroke="#4a90d8" />
      <path d="M6 8l2 2" stroke="#d8483c" strokeWidth="2" />
    </>
  )],
  ["Masquage temporaire", <path d="M1 3l4 7 3-3M7 6a2.500 2.500 0 1 1 3 4.500M10 3h3" stroke="#777" strokeWidth="1.300" />],
  ["Contraintes", (
    <>
      <path d="M1.500 1v12M1 4h12M5 2v4" stroke="#555" />
      <path d="M7 8h6v5H7z" fill="#555" />
      <path d="M8.500 8V6h3v2" stroke="#555" />
    </>
  )],
  ["Propriétés temporaires", (
    <>
      <path d="M1 2h12v10H1z" fill="#e4e4e4" stroke="#777" />
      <path d="M1 10h8" stroke="#666" strokeWidth="3" />
      <circle cx="10.500" cy="7" r="2.500" fill="#cfe4fa" stroke="#6aa8e8" />
    </>
  )],
];

const ViewBar = () => (
  <div className="flex h-[15px] items-center bg-[#eeeeee] pl-[19px]">
    <button type="button" className="mr-[17px] w-[27px] text-left leading-[15px] whitespace-nowrap">
      1 : 100
    </button>
    <div className="flex gap-[2px]">
      {viewTools.map(([label, icon]) => (
        <ToolButton key={label} label={label}>
          <Icon w={14} h={14}>
            {icon}
          </Icon>
        </ToolButton>
      ))}
    </div>
    <Icon w={6} h={8} className="ml-[8px]">
      <path d="M5 1L2 4l3 3" stroke="#444" strokeWidth="1.300" />
    </Icon>
    <div className="flex h-full flex-1 justify-center">
      <div className="h-[13px] w-[14px] bg-[#cbcbcb]" />
    </div>
    <Icon w={6} h={8} className="mr-[8px]">
      <path d="M1 1l3 3-3 3" stroke="#444" strokeWidth="1.500" />
    </Icon>
    <Icon w={10} h={10} className="mr-px">
      <path d="M7 1h2v2H7zM7 4h2v2H7zM7 7h2v2H7zM4 4h2v2H4zM4 7h2v2H4zM1 7h2v2H1z" fill="#b8b8b8" />
    </Icon>
  </div>
);

const ViewArea = () => (
  <main className="flex min-w-0 flex-1 flex-col">
    <DocTabs />
    <div className="flex min-h-0 flex-1">
      <div className="relative flex-1 bg-white">
        <SectionDrawing />
        <NavigationBar />
      </div>
      <div className="flex w-[14px] flex-col items-center justify-between bg-[#eeeeee] py-[5px]">
        <Icon w={8} h={6}>
          <path d="M1 5l3-3 3 3" stroke="#444" strokeWidth="1.500" />
        </Icon>
        <div className="h-[14px] w-full bg-[#cbcbcb]" />
        <Icon w={8} h={6}>
          <path d="M1 1l3 3 3-3" stroke="#444" strokeWidth="1.500" />
        </Icon>
      </div>
    </div>
    <ViewBar />
  </main>
);

const StatusBar = () => (
  <footer className="flex h-[6px] items-end justify-end gap-[9px] bg-[#cbcbcb] pr-[58px]">
    <span className="h-[2px] w-[10px] bg-[#d0bc70]" />
    <span className="ml-[4px] h-[2px] w-[6px] bg-[#c05850]" />
    <span className="h-[2px] w-[8px] bg-[#b87870]" />
    <span className="ml-[8px] h-[2px] w-[9px] bg-[#a86878]" />
    <span className="h-[2px] w-[2px] bg-[#444]" />
    <span className="ml-[24px] h-[2px] w-[13px] bg-[#888]" />
  </footer>
);

const App = () => {
  return (
    <div className="flex h-screen flex-col overflow-hidden border-r border-[#b8b8b8] bg-[#cbcbcb] font-['Open_Sans',sans-serif] text-[10px] text-[#333333]">
      <TitleBar />
      <MenuTabs />
      <Ribbon />
      <OptionsBar />
      <div className="flex min-h-0 flex-1 border-t border-b border-[#cbcbcb]">
        <aside className="flex w-[273px] shrink-0 flex-col border-r-3 border-[#cbcbcb]">
          <PropertiesPanel />
          <ProjectBrowser />
        </aside>
        <ViewArea />
      </div>
      <StatusBar />
    </div>
  );
};

export default App;
